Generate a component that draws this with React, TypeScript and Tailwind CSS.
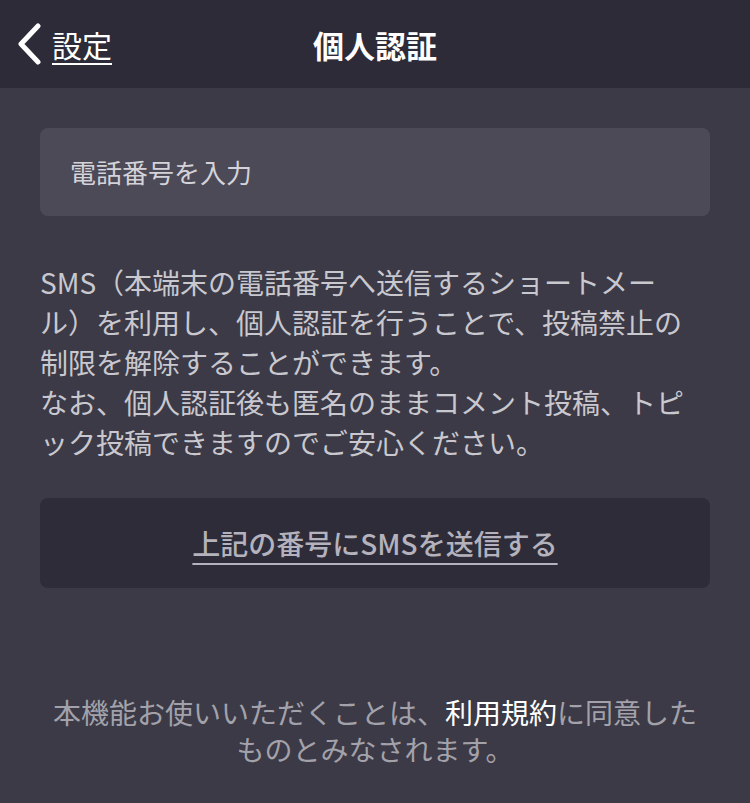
import React from "react";

export default function App() {
  return (
    <div
      className="w-[750px] h-[803px] bg-[#3b3a46] flex flex-col overflow-hidden"
      style={{ fontFamily: '"Noto Sans CJK JP", "Noto Sans", sans-serif' }}
    >
      <header className="relative h-[88px] bg-[#2d2b38] flex items-center justify-center shrink-0">
        <div className="absolute left-[16px] top-0 h-full flex items-center gap-[10px]">
          <svg width="26" height="42" viewBox="0 0 26 42" fill="none">
            <path d="M22 3 L5 21 L22 39" stroke="#ffffff" strokeWidth="5" strokeLinecap="round" strokeLinejoin="round" />
          </svg>
          <span className="text-[30px] leading-none text-white underline underline-offset-[6px] decoration-[1.5px]">設定</span>
        </div>
        <h1 className="text-[31px] font-bold text-white leading-none">個人認証</h1>
      </header>
      <main className="flex flex-col px-[40px] pt-[40px]">
        <div className="h-[88px] rounded-[8px] bg-[#4c4a57] flex items-center pl-[30px]">
          <span className="text-[26px] text-[#d4d3da] leading-none">電話番号を入力</span>
        </div>
        <p className="mt-[46px] text-[28px] leading-[40px] text-[#c9c8cf]">
          SMS（本端末の電話番号へ送信するショートメー
          <br />
          ル）を利用し、個人認証を行うことで、投稿禁止の
          <br />
          制限を解除することができます。
          <br />
          なお、個人認証後も匿名のままコメント投稿、トピ
          <br />
          ック投稿できますのでご安心ください。
        </p>
        <div className="mt-[36px] h-[90px] rounded-[8px] bg-[#2e2c38] flex items-center justify-center">
          <span className="text-[28px] font-medium text-[#b4b2bc] leading-none underline underline-offset-[8px] decoration-[2px]">
            上記の番号にSMSを送信する
          </span>
        </div>
        <p className="mt-[106px] text-center text-[28px] leading-[37px] text-[#a3a2ab]">
          本機能お使いいただくことは、<span className="text-white">利用規約</span>に同意した
          <br />
          ものとみなされます。
        </p>
      </main>
    </div>
  );
}
